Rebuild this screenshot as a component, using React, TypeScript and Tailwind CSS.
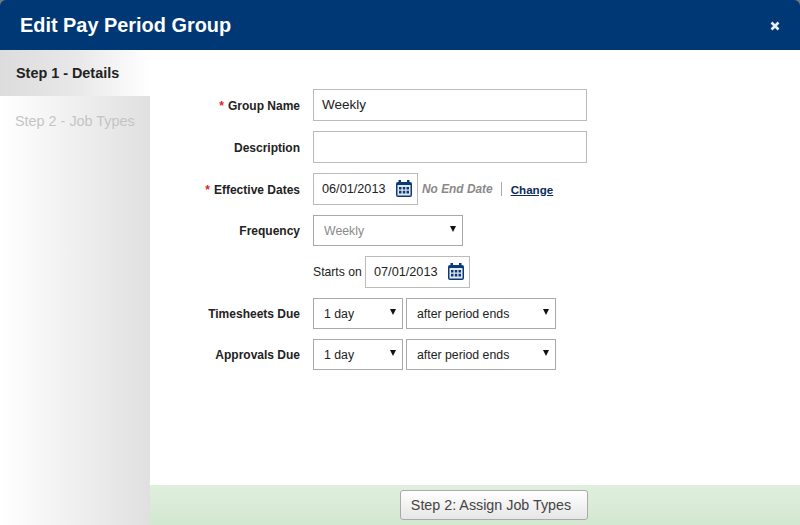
function Label({ text, required }: { text: string; required?: boolean }) {
  return (
    <div className="w-[150px] shrink-0 pt-px text-right text-[12px] font-bold text-[#222]">
      {required && <span className="mr-1 text-[#e8201a]">*</span>}
      {text}
    </div>
  );
}

function CalendarIcon() {
  return (
    <svg width="16" height="17" viewBox="0 0 16 17" className="mb-[2px] shrink-0">
      <rect x="2.5" y="0" width="2.5" height="4" fill="#0b3a78" />
      <rect x="11" y="0" width="2.5" height="4" fill="#0b3a78" />
      <rect x="0" y="2" width="16" height="15" rx="2" fill="#0b3a78" />
      <rect x="1.5" y="5" width="13" height="10.5" fill="#e4e9f1" />
      <path d="M3 7h2.5v2.6H3zM6.8 7h2.5v2.6H6.8zM10.5 7H13v2.6h-2.5zM3 10.8h2.5v2.6H3zM6.8 10.8h2.5v2.6H6.8zM10.5 10.8H13v2.6h-2.5z" fill="#0b3a78" />
    </svg>
  );
}

function DateBox({ value }: { value: string }) {
  return (
    <div className="flex h-8 w-[105px] items-center justify-between border border-[#bbb] bg-white pl-2 pr-[5px] text-[12.7px] text-[#222]">
      <span className="pt-[2px]">{value}</span>
      <CalendarIcon />
    </div>
  );
}

function Select({ value, width, muted }: { value: string; width: string; muted?: boolean }) {
  return (
    <div className={`relative h-[31px] ${width}`}>
      <select
        defaultValue={value}
        className={`h-full w-full appearance-none border border-[#a9a9a9] bg-white pl-[10px] pt-px text-[12.3px] outline-none ${muted ? "text-[#8a8a8a]" : "text-[#222]"}`}
      >
        <option>{value}</option>
      </select>
      <span className="pointer-events-none absolute right-[7px] top-[11px] h-0 w-0 border-x-[3.5px] border-t-[6px] border-x-transparent border-t-[#111]" />
    </div>
  );
}

export default function App() {
  return (
    <div className="flex h-[525px] w-[800px] flex-col overflow-hidden bg-[#777] font-['Liberation_Sans',Arial,sans-serif]">
      <div className="flex h-[50px] shrink-0 items-center justify-between rounded-t-[6px] bg-[#003876] pl-5 pr-[20px]">
        <h1 className="pt-[2px] text-[19.9px] font-bold text-white">Edit Pay Period Group</h1>
        <svg width="10" height="10" viewBox="0 0 10 10" className="mt-[2px]">
          <path d="M1.5 1.5l7 7M8.5 1.5l-7 7" stroke="#e6edf6" strokeWidth="2.6" />
        </svg>
      </div>

      <div className="flex min-h-0 flex-1 bg-white">
        <div className="flex w-[150px] shrink-0 flex-col bg-gradient-to-r from-white to-[#e0e0e0]">
          <div className="h-[46px] bg-gradient-to-r from-[#dcdcdc] via-[#e8e8e8] to-white pl-4 pt-[13px] text-[14.4px] font-bold text-[#222]">
            Step 1 - Details
          </div>
          <div className="pl-[15px] pt-[15px] text-[14.4px] text-[#c4c4c4]">Step 2 - Job Types</div>
        </div>

        <div className="flex min-w-0 flex-1 flex-col">
          <div className="flex flex-1 flex-col gap-[10px] pt-[39px]">
            <div className="flex items-center gap-[13px]">
              <Label text="Group Name" required />
              <div className="flex h-8 w-[274px] items-center border border-[#bbb] bg-white pl-2 pt-px text-[13.5px] text-[#222]">Weekly</div>
            </div>
            <div className="flex items-center gap-[13px]">
              <Label text="Description" />
              <div className="h-8 w-[274px] border border-[#bbb] bg-white" />
            </div>
            <div className="flex items-center gap-[13px]">
              <Label text="Effective Dates" required />
              <DateBox value="06/01/2013" />
              <div className="-ml-[9px] flex items-center pt-px text-[11.9px]">
                <span className="font-bold italic text-[#8a8a8a]">No End Date</span>
                <span className="ml-[8px] h-[14px] w-px bg-[#aaa]" />
                <a href="#" className="ml-[9px] text-[11.6px] font-bold text-[#0b2d5c] underline">Change</a>
              </div>
            </div>
            <div className="flex items-center gap-[13px]">
              <Label text="Frequency" />
              <Select value="Weekly" width="w-[150px]" muted />
            </div>
            <div className="flex items-center pl-[163px]">
              <span className="mr-[3px] w-[49px] text-[12.2px] text-[#222]">Starts on</span>
              <DateBox value="07/01/2013" />
            </div>
            <div className="flex items-center gap-[13px]">
              <Label text="Timesheets Due" />
              <div className="flex gap-[3px]">
                <Select value="1 day" width="w-[90px]" />
                <Select value="after period ends" width="w-[150px]" />
              </div>
            </div>
            <div className="flex items-center gap-[13px]">
              <Label text="Approvals Due" />
              <div className="flex gap-[3px]">
                <Select value="1 day" width="w-[90px]" />
                <Select value="after period ends" width="w-[150px]" />
              </div>
            </div>
          </div>

          <div className="flex h-10 shrink-0 items-center bg-gradient-to-b from-[#dff0dc] to-[#d3e8d0] pl-[250px]">
            <button className="h-[30px] w-[188px] rounded-[3px] border border-[#aaa] bg-gradient-to-b from-white to-[#e6e6e6] pr-[6px] pt-px text-[14.3px] text-[#444]">
              Step 2: Assign Job Types
            </button>
          </div>
        </div>
      </div>
    </div>
  );
}
